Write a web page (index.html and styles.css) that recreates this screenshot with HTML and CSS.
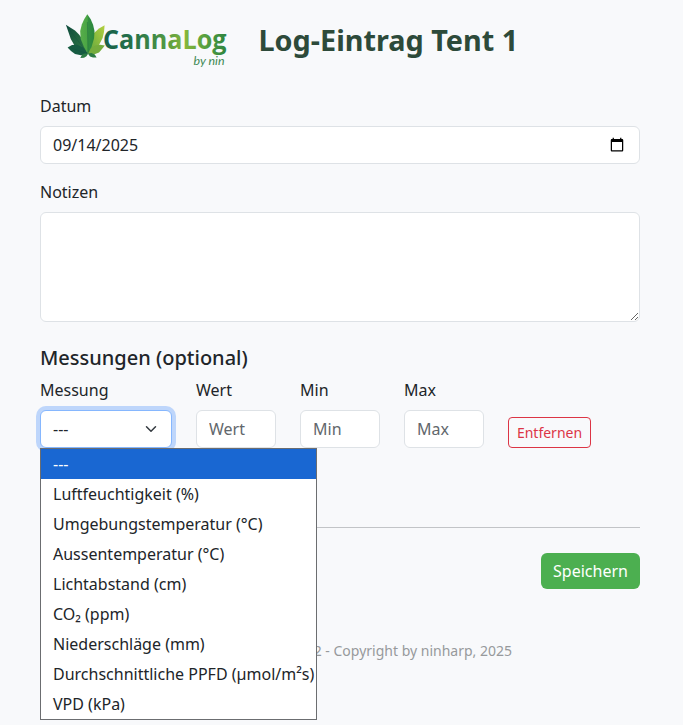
FILE: index.html
```html
<!DOCTYPE html>
<html lang="de">
<head>
<meta charset="utf-8">
<title>Log-Eintrag Tent 1</title>
<link rel="stylesheet" href="styles.css">
</head>
<body>
<main class="page">
  <header class="header">
    <svg class="logo" width="164" height="60" viewBox="64 10 164 60" role="img" aria-label="CannaLog by nin">
      <defs>
        <linearGradient id="word" gradientUnits="userSpaceOnUse" x1="104" y1="0" x2="227" y2="0">
          <stop offset="0" stop-color="#17604a"/>
          <stop offset=".25" stop-color="#27734a"/>
          <stop offset=".48" stop-color="#4c9544"/>
          <stop offset=".66" stop-color="#86b63a"/>
          <stop offset=".8" stop-color="#5da33f"/>
          <stop offset="1" stop-color="#2d843f"/>
        </linearGradient>
        <linearGradient id="mid" x1="0" x2="1"><stop offset="0" stop-color="#58ad4a"/><stop offset=".5" stop-color="#4aa544"/><stop offset=".54" stop-color="#349141"/><stop offset="1" stop-color="#2a853d"/></linearGradient>
        <linearGradient id="left" x1="0" y1="0" x2="1" y2="1"><stop offset="0" stop-color="#0e4a3c"/><stop offset="1" stop-color="#327d45"/></linearGradient>
        <linearGradient id="right" x1="0" y1="1" x2="1" y2="0"><stop offset="0" stop-color="#5ba33f"/><stop offset="1" stop-color="#b4d03e"/></linearGradient>
      </defs>
      <path fill="url(#left)" d="M65.9 24.8L71 28L75 30.5L79 34.5L83 40L87.5 54L80 50.5L74.5 45.5L70.8 39L68.4 32Z"/>
      <path fill="url(#right)" d="M104.6 25.2L104 32L102.6 38L99 45L94.5 50L88 54L88.4 46L91 38.5L94 33L99 28.5Z"/>
      <path fill="url(#mid)" d="M87.3 14.2L90.6 19L93 24.5L94.5 31L94 38.5L91.5 47L87.8 54L84 47L80.7 39L80.2 31L81.8 24.5L84.3 19Z"/>
      <path fill="#175c42" d="M67.6 47.5L72 45L77 44.8L83 47.5L88 54L81 55.2L75 54L71 51Z"/>
      <path fill="#75ac3d" d="M104.8 45.6L100 44.8L95 45.5L91 48.5L88 54L94.5 54.3L99 52.5L102 49Z"/>
      <path fill="#2c7b43" d="M80.3 58L82 54.8L85 53.2L88.2 53.4L86.5 56.3L84 57.8ZM96.6 57.5L94.8 54.5L91.5 53L87.8 53.4L90 56.4L93 57.5Z"/>
      <path fill="none" stroke="#0f503c" stroke-width=".5" stroke-opacity=".65" d="M68 28L87.5 53M88 53L87.4 22M71 48L87 53.5"/>
      <text class="logo-word" x="103" y="48.6" textLength="123.5" lengthAdjust="spacingAndGlyphs" fill="url(#word)">CannaLog</text>
      <text class="logo-by" x="193.5" y="64.5" textLength="31" lengthAdjust="spacingAndGlyphs">by nin</text>
    </svg>
    <h1 class="title">Log-Eintrag Tent 1</h1>
  </header>
  <form class="form">
    <div class="field">
      <label class="label" for="datum">Datum</label>
      <input class="control" id="datum" type="date" value="2025-09-14">
    </div>
    <div class="field">
      <label class="label" for="notizen">Notizen</label>
      <textarea class="control notes" id="notizen"></textarea>
    </div>
    <h2 class="subtitle">Messungen (optional)</h2>
    <div class="row">
      <div class="measure">
        <span class="label">Messung</span>
        <div class="control select">
          <span>---</span>
          <svg width="16" height="12" viewBox="0 0 16 16" aria-hidden="true"><path d="m2 5 6 6 6-6" fill="none" stroke="#343a40" stroke-width="2" stroke-linecap="round" stroke-linejoin="round"/></svg>
        </div>
        <ul class="menu">
          <li class="option selected">---</li>
          <li class="option">Luftfeuchtigkeit (%)</li>
          <li class="option">Umgebungstemperatur (°C)</li>
          <li class="option">Aussentemperatur (°C)</li>
          <li class="option">Lichtabstand (cm)</li>
          <li class="option">CO₂ (ppm)</li>
          <li class="option">Niederschläge (mm)</li>
          <li class="option">Durchschnittliche PPFD (µmol/m²s)</li>
          <li class="option">VPD (kPa)</li>
        </ul>
      </div>
      <div class="value"><label class="label" for="wert">Wert</label><input class="control" id="wert" placeholder="Wert"></div>
      <div class="value"><label class="label" for="min">Min</label><input class="control" id="min" placeholder="Min"></div>
      <div class="value"><label class="label" for="max">Max</label><input class="control" id="max" placeholder="Max"></div>
      <button class="remove" type="button">Entfernen</button>
    </div>
    <hr class="divider">
    <div class="actions"><button class="save" type="button">Speichern</button></div>
  </form>
  <footer class="footer">2 - Copyright by ninharp, 2025</footer>
</main>
</body>
</html>
```
FILE: styles.css
```css
* { box-sizing: border-box; }
html { background: #f8f9fb; }
body {
  margin: 0;
  height: 725px;
  overflow: hidden;
  color: #212529;
  font: 16px/24px "Noto Sans", sans-serif;
}
.page { width: 600px; margin-left: 40px; padding-top: 10px; }
.header { display: flex; align-items: center; height: 60px; padding-left: 24px; }
.logo { flex: none; }
.logo-word { font: 700 27px "Open Sans", sans-serif; }
.logo-by { font: italic 12px/1 Lato, sans-serif; fill: #3f8a55; }
.title {
  margin: 0 0 0 30.5px;
  color: #2d4a3a;
  font-size: 28.8px;
  line-height: 36px;
  font-weight: 700;
  white-space: nowrap;
}
.form { margin-top: 24px; }
.field { margin-bottom: 16px; }
.label { display: block; margin-bottom: 8px; }
.control {
  display: block;
  width: 100%;
  height: 38px;
  margin: 0;
  padding: 6px 12px;
  border: 1px solid #dee2e6;
  border-radius: 6px;
  background: #fff;
  color: #212529;
  font: inherit;
}
.control::placeholder { color: #62676c; opacity: 1; }
.control::-webkit-datetime-edit { padding: 0; }
.control::-webkit-datetime-edit-month-field,
.control::-webkit-datetime-edit-day-field,
.control::-webkit-datetime-edit-year-field { padding: 0; }
.notes { height: 110px; resize: vertical; }
.subtitle { margin: 24px 0 8px; font-size: 20px; line-height: 24px; font-weight: 500; }
.row { display: flex; align-items: flex-end; gap: 24px; }
.measure { position: relative; width: 132px; }
.value { width: 80px; }
.select {
  display: flex;
  align-items: center;
  justify-content: space-between;
  border-color: #86b7fe;
  box-shadow: 0 0 0 4px #bed6fb;
}
.menu {
  position: absolute;
  top: 100%;
  left: 0;
  width: 277px;
  margin: 0;
  padding: 0;
  border: 1px solid #6b6d70;
  background: #fff;
  list-style: none;
}
.option { height: 30px; padding-left: 12px; line-height: 30px; white-space: nowrap; }
.selected { background: #1967d2; color: #fff; }
.remove {
  width: 83px;
  height: 31px;
  padding: 0;
  border: 1px solid #dc3545;
  border-radius: 4px;
  background: transparent;
  color: #dc3545;
  font: 14px/21px "Noto Sans", sans-serif;
}
.divider { margin: 79px 0 25px; border: 0; border-top: 1px solid #c2c4c7; }
.actions { display: flex; justify-content: flex-end; }
.save {
  width: 99px;
  height: 36px;
  padding: 0;
  border: 0;
  border-radius: 6px;
  background: #4caf50;
  color: #fff;
  font: inherit;
}
.footer {
  margin-top: 51px;
  color: #97999c;
  font-size: 14px;
  line-height: 21px;
  padding-right: 128px;
  text-align: right;
}
```
